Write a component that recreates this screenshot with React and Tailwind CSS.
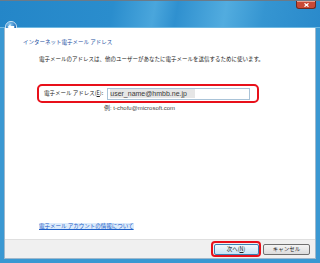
const jp = { fontFamily: '"Meiryo", "Noto Sans CJK JP", sans-serif' };
const latin = { fontFamily: '"Liberation Sans", Arial, "Noto Sans CJK JP", sans-serif' };

function BackButton() {
  return (
    <svg width="12" height="12" viewBox="0 0 12 12" className="mt-[14px] shrink-0">
      <defs>
        <radialGradient id="bb" cx="0.4" cy="0.3" r="0.8">
          <stop offset="0" stopColor="#8fd0f5" />
          <stop offset="0.6" stopColor="#2a78c0" />
          <stop offset="1" stopColor="#164f8c" />
        </radialGradient>
      </defs>
      <circle cx="6" cy="6" r="5.6" fill="url(#bb)" stroke="#e8f4fc" strokeWidth="0.8" />
      <path d="M2.6 6 L5.6 3.2 L5.6 4.9 L9.2 4.9 L9.2 7.1 L5.6 7.1 L5.6 8.8 Z" fill="#ffffff" />
    </svg>
  );
}

function CloseButton() {
  return (
    <div className="w-[20px] h-[8px] shrink-0 rounded-b-[3px] bg-[#c94a36] border border-t-0 border-[#6e2a20] shadow-[inset_0_1px_0_#eaa090] flex items-center justify-center">
      <svg width="5" height="4" viewBox="0 0 5 4">
        <path d="M0.5 0.3 L4.5 3.7 M4.5 0.3 L0.5 3.7" stroke="#ffffff" strokeWidth="1.2" />
      </svg>
    </div>
  );
}

export default function App() {
  return (
    <div className="w-[320px] h-[263px] overflow-hidden flex flex-col bg-[#3a98d2]">
      {/* title bar */}
      <div className="h-[28px] shrink-0 flex flex-col bg-[linear-gradient(100deg,#2486c8_0%,#2a8dcd_35%,#4aa6dc_48%,#2f90cf_55%,#52acdf_70%,#3595d1_82%,#2a8acb_100%)] border-t border-b border-t-[#6b7a88] border-b-[#6fb9e2]">
        <div className="flex justify-end pr-[4px]">
          <CloseButton />
        </div>
        <div className="flex pl-[5px] -mt-[2px]">
          <BackButton />
        </div>
      </div>

      {/* client area */}
      <div className="flex-1 mx-[4px] bg-white flex flex-col border border-t-0 border-[#9fb8cc]">
        <div className="flex-1 flex flex-col pl-[18px]" style={jp}>
          <div className="mt-[10px] text-[5.5px] leading-[8px] text-[#1e50a2]">インターネット電子メール アドレス</div>
          <div className="mt-[9px] ml-[16px] text-[5.5px] leading-[8px] text-[#222]">
            電子メールのアドレスは、他のユーザーがあなたに電子メールを送信するために使います。
          </div>

          <div className="mt-[21px] ml-[14px] w-[222px] h-[19px] rounded-[5px] border-2 border-[#e8101a] flex items-center pl-[5px]">
            <span className="text-[5.5px] text-[#222] whitespace-nowrap">電子メール アドレス(<span className="underline">E</span>):</span>
            <div className="ml-[4px] w-[143px] h-[12px] border border-[#a9c3d8] bg-white flex items-center pl-[2px]">
              <span className="bg-[#e6e6e6] text-[7px] font-medium text-[#3a3a3a] leading-[9px] pr-[8px]" style={latin}>
                user_name@hmbb.ne.jp
              </span>
            </div>
          </div>
          <div className="ml-[81px] mt-[2px] text-[6px] leading-[7px] text-[#444]" style={latin}>
            例: t-chofu@microsoft.com
          </div>

          <div className="mt-auto mb-[9px] ml-[16px] text-[5.5px] leading-[7px] text-[#1e60c8] underline bg-[#dcebfb] self-start">
            電子メール アカウントの情報について
          </div>
        </div>

        {/* footer */}
        <div className="h-[19px] bg-[#f0f0f0] border-t border-[#dfdfdf] flex items-center justify-end pr-[5px] gap-[2px]" style={jp}>
          <div className="rounded-[4px] border-2 border-[#e8101a] p-[0.5px]">
            <div className="w-[45px] h-[11px] rounded-[2px] border border-[#3c7fb1] bg-gradient-to-b from-[#f2f9fd] to-[#c5e3f6] flex items-center justify-center text-[5.5px] text-[#222]">
              次へ(<span className="underline">N</span>)
            </div>
          </div>
          <div className="w-[47px] h-[11px] rounded-[2px] border border-[#707070] bg-gradient-to-b from-[#f4f4f4] to-[#dcdcdc] flex items-center justify-center text-[5.5px] text-[#222]">
            キャンセル
          </div>
        </div>
      </div>
      <div className="h-[4px] shrink-0" />
    </div>
  );
}
